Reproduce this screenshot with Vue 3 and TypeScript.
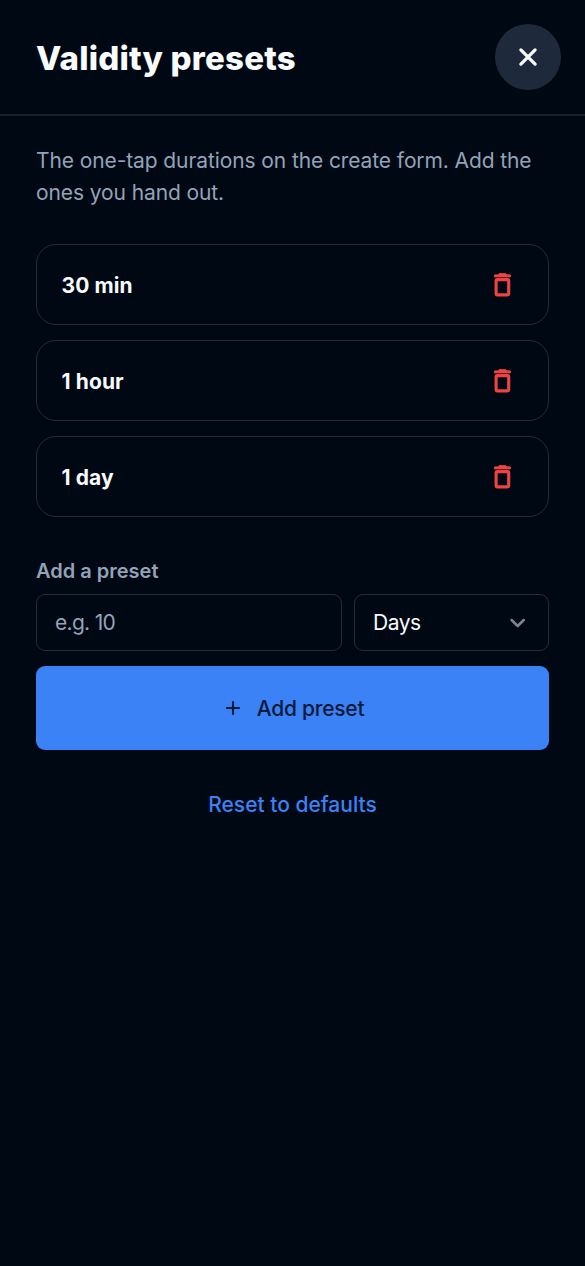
<script setup lang="ts">
import { ref } from 'vue'

interface Preset {
  id: number
  label: string
}

const defaults: Preset[] = [
  { id: 1, label: '30 min' },
  { id: 2, label: '1 hour' },
  { id: 3, label: '1 day' },
]

const presets = ref<Preset[]>([...defaults])
const amount = ref('')
const unit = ref('Days')
let nextId = 4

function removePreset(id: number): void {
  presets.value = presets.value.filter((p) => p.id !== id)
}

function addPreset(): void {
  const n = Number(amount.value)
  if (!Number.isInteger(n) || n < 1) return
  const name = unit.value.toLowerCase()
  presets.value.push({ id: nextId++, label: `${n} ${n === 1 ? name.slice(0, -1) : name}` })
  amount.value = ''
}

function reset(): void {
  presets.value = [...defaults]
}
</script>

<template>
  <main class="sheet">
    <header class="header">
      <h1 class="title">Validity presets</h1>
      <button class="close" type="button" aria-label="Close">
        <svg width="20" height="20" viewBox="0 0 20 20" fill="none">
          <path d="M2.9 2.9 17.1 17.1M17.1 2.9 2.9 17.1" stroke="#f8fafc" stroke-width="3.3" stroke-linecap="round" />
        </svg>
      </button>
    </header>

    <div class="content">
      <p class="intro">The one-tap durations on the create form. Add the<br />ones you hand out.</p>

      <ul class="list">
        <li v-for="preset in presets" :key="preset.id" class="item">
          <span class="name">{{ preset.label }}</span>
          <button class="remove" type="button" aria-label="Remove" @click="removePreset(preset.id)">
            <svg width="20" height="26" viewBox="0 0 20 26" fill="none">
              <path d="M2.4 2.9H5.8L7 1.7H13.8L15 2.9H18.4V4.9H2.4Z" fill="#ef4444" stroke="#ef4444" stroke-width="1" stroke-linejoin="round" />
              <rect x="4.1" y="7.6" width="12.6" height="15.3" rx="1.3" stroke="#ef4444" stroke-width="3.1" />
            </svg>
          </button>
        </li>
      </ul>

      <form class="form" @submit.prevent="addPreset">
        <label class="label" for="amount">Add a preset</label>
        <div class="fields">
          <input id="amount" v-model="amount" class="field amount" inputmode="numeric" placeholder="e.g. 10" />
          <div class="select">
            <select v-model="unit" class="field unit" aria-label="Unit">
              <option>Minutes</option>
              <option>Hours</option>
              <option>Days</option>
            </select>
            <svg class="chevron" width="18" height="12" viewBox="0 0 18 12" fill="none">
              <path d="M2.6 3 8.7 9 14.8 3" stroke="#7c8596" stroke-width="2.5" stroke-linecap="round" stroke-linejoin="round" />
            </svg>
          </div>
        </div>
        <button class="add" type="submit">
          <svg width="16" height="16" viewBox="0 0 16 16" fill="none">
            <path d="M8 2V14M2 8H14" stroke="#0b1a38" stroke-width="2.1" stroke-linecap="round" />
          </svg>
          <span>Add preset</span>
        </button>
      </form>

      <button class="reset" type="button" @click="reset">Reset to defaults</button>
    </div>
  </main>
</template>

<style>
body {
  margin: 0;
  background: #000814;
}
</style>

<style scoped>
.sheet,
.sheet * {
  box-sizing: border-box;
}
.sheet {
  min-height: 1266px;
  background: #000814;
  color: #f8fafc;
  font-family: Inter, "Liberation Sans", sans-serif;
  font-size: 21px;
}
button {
  padding: 0;
  border: 0;
  background: none;
  font: inherit;
  color: inherit;
}
.header {
  display: flex;
  align-items: center;
  justify-content: space-between;
  height: 116px;
  padding: 0 24px 0 36px;
  border-bottom: 2px solid #17212c;
}
.title {
  margin: 2px 0 0;
  font-size: 33px;
  line-height: 40px;
  font-weight: 800;
  letter-spacing: 0.2px;
}
.close {
  display: flex;
  align-items: center;
  justify-content: center;
  width: 66px;
  height: 66px;
  border-radius: 50%;
  background: #1e293b;
}
.content {
  padding: 29px 36px 0;
}
.intro {
  margin: 0;
  line-height: 32px;
  letter-spacing: -0.1px;
  white-space: nowrap;
  color: #94a3b8;
}
.list {
  display: flex;
  flex-direction: column;
  gap: 15px;
  margin: 35px 0 0;
  padding: 0;
  list-style: none;
}
.item {
  display: flex;
  align-items: center;
  justify-content: space-between;
  height: 81px;
  padding: 0 36px 0 24.5px;
  border: 1.5px solid #222c38;
  border-radius: 20px;
}
.name {
  margin-top: 2px;
  font-weight: 650;
  letter-spacing: 0.1px;
}
.remove {
  display: flex;
}
.form {
  display: flex;
  flex-direction: column;
  margin-top: 40px;
}
.label {
  font-size: 20px;
  line-height: 28px;
  font-weight: 600;
  color: #94a3b8;
}
.fields {
  display: grid;
  grid-template-columns: 306px 195px;
  gap: 12px;
  margin-top: 9px;
}
.field {
  width: 100%;
  height: 57px;
  margin: 0;
  padding: 0 18px;
  border: 1.5px solid #222c38;
  border-radius: 9px;
  outline: none;
  appearance: none;
  background: transparent;
  color: #f8fafc;
  font: inherit;
}
.amount {
  letter-spacing: -0.7px;
}
.amount::placeholder {
  color: #94a3b8;
  opacity: 1;
}
.unit {
  letter-spacing: -0.5px;
}
.select {
  display: grid;
  align-items: center;
}
.select > * {
  grid-area: 1 / 1;
}
.unit option {
  background: #000814;
}
.chevron {
  justify-self: end;
  margin-right: 22px;
  pointer-events: none;
}
.add {
  display: flex;
  align-items: center;
  justify-content: center;
  gap: 16px;
  height: 84px;
  margin-top: 15px;
  padding-left: 4px;
  border-radius: 9px;
  background: #3b82f6;
  color: #0b1a38;
  font-weight: 500;
  letter-spacing: -0.25px;
}
.reset {
  display: block;
  margin: 39px auto 0;
  line-height: 32px;
  color: #3b82f6;
  font-weight: 500;
}
</style>
